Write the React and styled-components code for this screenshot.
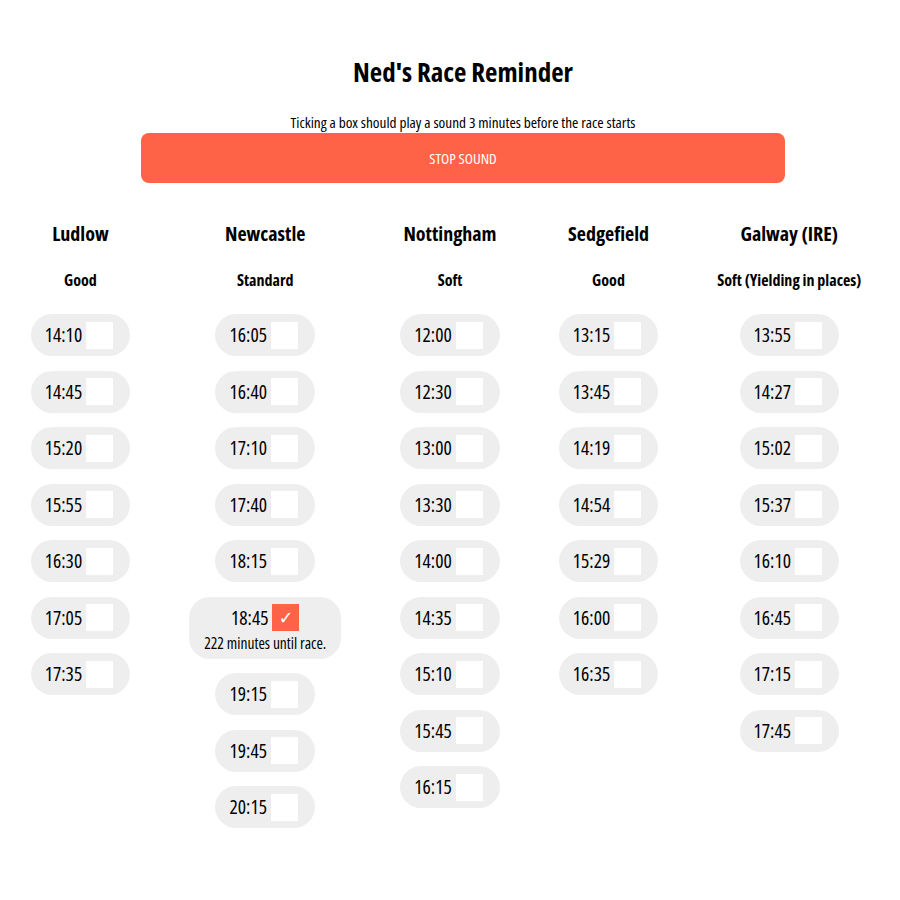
import React from "react";
import styled, { createGlobalStyle } from "styled-components";

const Global = createGlobalStyle`
  body {
    margin: 8px;
    background: #ffffff;
    font-family: "Open Sans", "Roboto", sans-serif;
    font-stretch: 75%;
    color: #000;
  }
`;

const Page = styled.div`
  display: flex;
  flex-direction: column;
  align-items: stretch;
`;

const Header = styled.header`
  display: flex;
  flex-direction: column;
  align-items: center;
  padding-left: 26px;
`;

const Title = styled.h1`
  margin: 44px 0 0;
  font-size: 27px;
  font-weight: 700;
  line-height: 40px;
`;

const Subtitle = styled.p`
  margin: 21px 0 0;
  font-size: 15.3px;
  line-height: 18px;
`;

const StopButton = styled.button`
  margin-top: 2px;
  width: 644px;
  height: 50px;
  border: none;
  border-radius: 8px;
  background: #ff6347;
  color: #fff;
  font-family: inherit;
  font-stretch: 75%;
  font-size: 15px;
  font-weight: 500;
  text-transform: uppercase;
`;

const Columns = styled.div`
  display: flex;
  justify-content: center;
  gap: 59px;
  margin-top: 36px;
  padding-right: 8px;
`;

const Column = styled.div`
  display: flex;
  flex-direction: column;
  align-items: center;
`;

const Course = styled.h2`
  margin: 0;
  font-size: 20px;
  font-weight: 700;
  line-height: 30px;
`;

const Going = styled.div`
  margin-top: 21px;
  font-size: 16px;
  font-weight: 700;
  line-height: 20px;
`;

const Races = styled.div`
  margin-top: 24px;
  display: flex;
  flex-direction: column;
  align-items: center;
  gap: 14.5px;
`;

const Pill = styled.label`
  display: flex;
  flex-direction: column;
  align-items: center;
  justify-content: center;
  background: #eeeeee;
  border-radius: 21px;
  padding: ${(p) => (p.$open ? "7px 15px 6px" : "0 17px 0 14px")};
  min-height: 42px;
  box-sizing: border-box;
`;

const Row = styled.div`
  display: flex;
  align-items: center;
  gap: 4px;
`;

const Time = styled.span`
  font-size: 19.5px;
  line-height: 28px;
`;

const Box = styled.span`
  width: 27px;
  height: 27px;
  background: ${(p) => (p.$checked ? "#ff6347" : "#ffffff")};
  color: #fff;
  display: flex;
  align-items: center;
  justify-content: center;
  font-family: "DejaVu Sans", sans-serif;
  font-stretch: normal;
  font-size: 18px;
`;

const Countdown = styled.div`
  font-size: 15.5px;
  line-height: 20px;
  margin-top: 1px;
`;

const data = [
  { course: "Ludlow", going: "Good", times: ["14:10", "14:45", "15:20", "15:55", "16:30", "17:05", "17:35"] },
  { course: "Newcastle", going: "Standard", times: ["16:05", "16:40", "17:10", "17:40", "18:15", "18:45", "19:15", "19:45", "20:15"], checked: "18:45" },
  { course: "Nottingham", going: "Soft", times: ["12:00", "12:30", "13:00", "13:30", "14:00", "14:35", "15:10", "15:45", "16:15"] },
  { course: "Sedgefield", going: "Good", times: ["13:15", "13:45", "14:19", "14:54", "15:29", "16:00", "16:35"] },
  { course: "Galway (IRE)", going: "Soft (Yielding in places)", times: ["13:55", "14:27", "15:02", "15:37", "16:10", "16:45", "17:15", "17:45"] },
];

export default function App() {
  return (
    <>
      <Global />
      <Page>
        <Header>
          <Title>Ned's Race Reminder</Title>
          <Subtitle>Ticking a box should play a sound 3 minutes before the race starts</Subtitle>
          <StopButton>Stop sound</StopButton>
        </Header>
        <Columns>
          {data.map((c) => (
            <Column key={c.course}>
              <Course>{c.course}</Course>
              <Going>{c.going}</Going>
              <Races>
                {c.times.map((t) => {
                  const on = c.checked === t;
                  return (
                    <Pill key={t} $open={on}>
                      <Row>
                        <Time>{t}</Time>
                        <Box $checked={on}>{on ? "✓" : ""}</Box>
                      </Row>
                      {on && <Countdown>222 minutes until race.</Countdown>}
                    </Pill>
                  );
                })}
              </Races>
            </Column>
          ))}
        </Columns>
      </Page>
    </>
  );
}
